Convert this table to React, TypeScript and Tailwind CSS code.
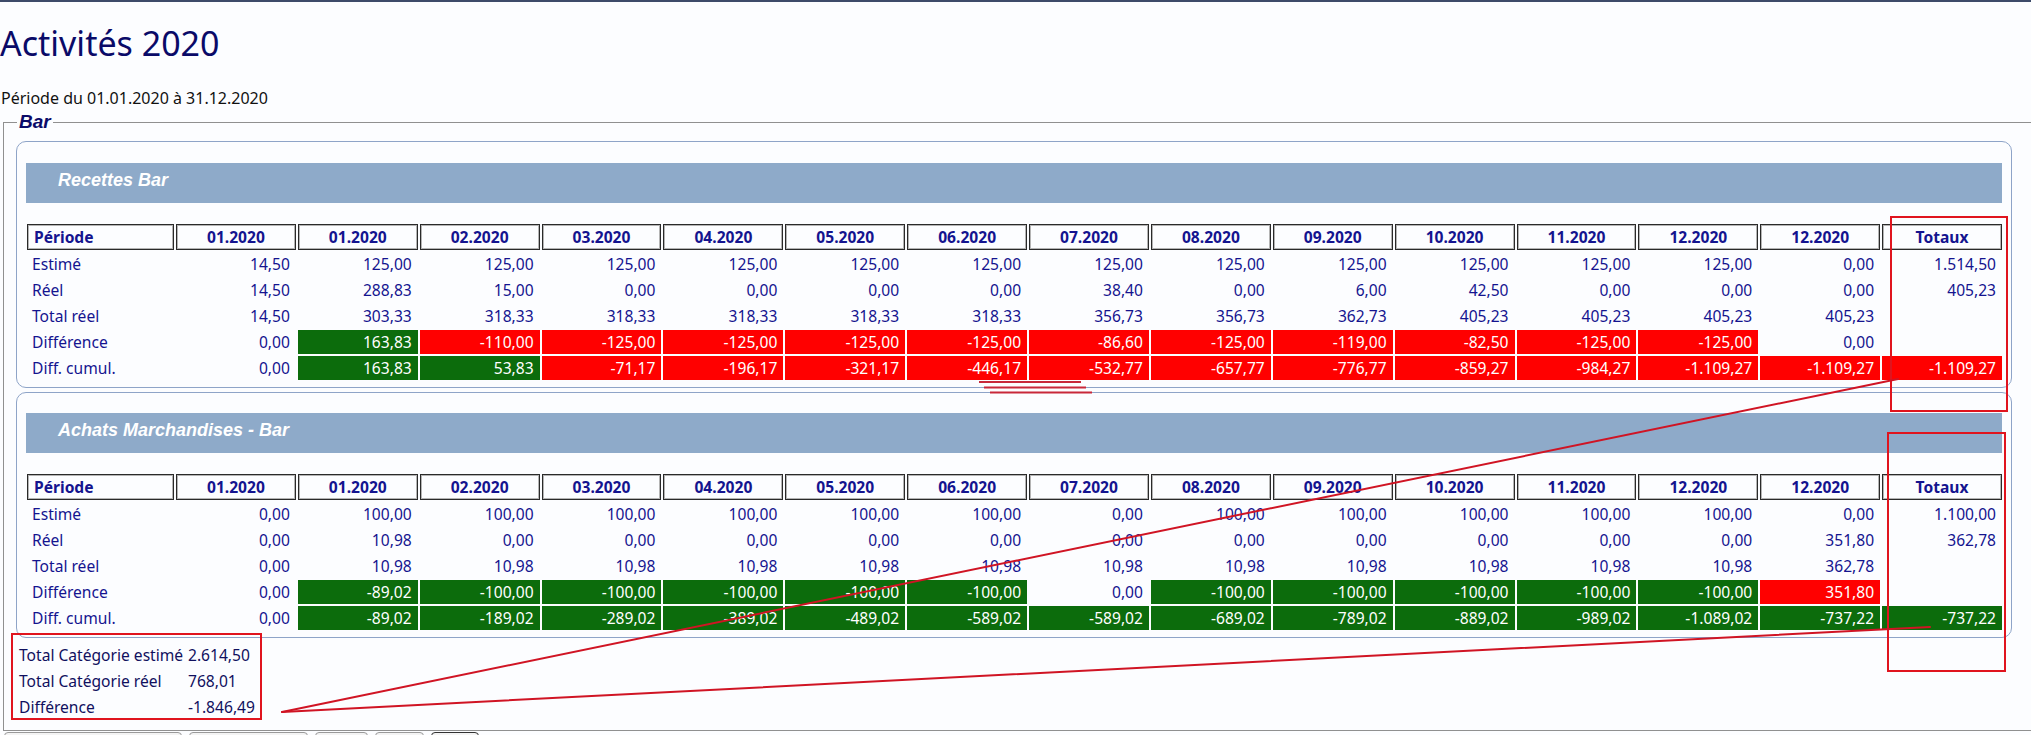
import React, { Fragment } from "react";

type Cell = [string, string?];
type Row = { label: string; cells: Cell[] };

const HEAD = [
  "01.2020",
  "01.2020",
  "02.2020",
  "03.2020",
  "04.2020",
  "05.2020",
  "06.2020",
  "07.2020",
  "08.2020",
  "09.2020",
  "10.2020",
  "11.2020",
  "12.2020",
  "12.2020",
  "Totaux",
];

const p = (v: string): Cell => [v];
const g = (v: string): Cell => [v, "g"];
const r = (v: string): Cell => [v, "r"];

const T1: Row[] = [
  {
    label: "Estimé",
    cells: [
      "14,50", "125,00", "125,00", "125,00", "125,00", "125,00", "125,00", "125,00",
      "125,00", "125,00", "125,00", "125,00", "125,00", "0,00", "1.514,50",
    ].map(p),
  },
  {
    label: "Réel",
    cells: [
      "14,50", "288,83", "15,00", "0,00", "0,00", "0,00", "0,00", "38,40", "0,00",
      "6,00", "42,50", "0,00", "0,00", "0,00", "405,23",
    ].map(p),
  },
  {
    label: "Total réel",
    cells: [
      "14,50", "303,33", "318,33", "318,33", "318,33", "318,33", "318,33", "356,73",
      "356,73", "362,73", "405,23", "405,23", "405,23", "405,23", "",
    ].map(p),
  },
  {
    label: "Différence",
    cells: [
      p("0,00"), g("163,83"), r("-110,00"), r("-125,00"), r("-125,00"), r("-125,00"),
      r("-125,00"), r("-86,60"), r("-125,00"), r("-119,00"), r("-82,50"), r("-125,00"),
      r("-125,00"), p("0,00"), p(""),
    ],
  },
  {
    label: "Diff. cumul.",
    cells: [
      p("0,00"), g("163,83"), g("53,83"), r("-71,17"), r("-196,17"), r("-321,17"),
      r("-446,17"), r("-532,77"), r("-657,77"), r("-776,77"), r("-859,27"), r("-984,27"),
      r("-1.109,27"), r("-1.109,27"), r("-1.109,27"),
    ],
  },
];

const T2: Row[] = [
  {
    label: "Estimé",
    cells: [
      "0,00", "100,00", "100,00", "100,00", "100,00", "100,00", "100,00", "0,00",
      "100,00", "100,00", "100,00", "100,00", "100,00", "0,00", "1.100,00",
    ].map(p),
  },
  {
    label: "Réel",
    cells: [
      "0,00", "10,98", "0,00", "0,00", "0,00", "0,00", "0,00", "0,00", "0,00", "0,00",
      "0,00", "0,00", "0,00", "351,80", "362,78",
    ].map(p),
  },
  {
    label: "Total réel",
    cells: [
      "0,00", "10,98", "10,98", "10,98", "10,98", "10,98", "10,98", "10,98", "10,98",
      "10,98", "10,98", "10,98", "10,98", "362,78", "",
    ].map(p),
  },
  {
    label: "Différence",
    cells: [
      p("0,00"), g("-89,02"), g("-100,00"), g("-100,00"), g("-100,00"), g("-100,00"),
      g("-100,00"), p("0,00"), g("-100,00"), g("-100,00"), g("-100,00"), g("-100,00"),
      g("-100,00"), r("351,80"), p(""),
    ],
  },
  {
    label: "Diff. cumul.",
    cells: [
      p("0,00"), g("-89,02"), g("-189,02"), g("-289,02"), g("-389,02"), g("-489,02"),
      g("-589,02"), g("-589,02"), g("-689,02"), g("-789,02"), g("-889,02"), g("-989,02"),
      g("-1.089,02"), g("-737,22"), g("-737,22"),
    ],
  },
];

function DataTable({ rows }: { rows: Row[] }) {
  return (
    <div className="ml-px mt-[21px] grid grid-cols-[147px_repeat(15,minmax(0,1fr))] gap-[2px] text-[15.6px] text-[#14148f]">
      <div className="h-[26px] border border-[#2a2a2a] pl-[6px] text-left font-bold leading-[24px] shadow-[inset_0_0_0_1px_#b4b4b4]">
        Période
      </div>
      {HEAD.map((h, i) => (
        <div
          key={i}
          className="h-[26px] border border-[#2a2a2a] text-center font-bold leading-[24px] shadow-[inset_0_0_0_1px_#b4b4b4]"
        >
          {h}
        </div>
      ))}
      {rows.map((row, ri) => (
        <Fragment key={ri}>
          <div className="h-[24px] pl-[5px] leading-[24px]">{row.label}</div>
          {row.cells.map((c, ci) => (
            <div
              key={ci}
              className={
                "h-[24px] pr-[6px] text-right leading-[24px] " +
                (c[1] === "g"
                  ? "bg-[#0c6c0c] text-white"
                  : c[1] === "r"
                  ? "bg-[#ff0000] text-white"
                  : "")
              }
            >
              {c[0]}
            </div>
          ))}
        </Fragment>
      ))}
    </div>
  );
}

function Panel({ title, rows, top }: { title: string; rows: Row[]; top: string }) {
  return (
    <div
      className={
        "ml-[12px] mr-[19px] rounded-[10px] border border-[#8ea4c8] px-[9px] pb-[7px] " + top
      }
    >
      <div className="h-[40px] bg-[#8eaac9] pl-[32px] pt-[6px] font-['Liberation_Sans',Arial,sans-serif] text-[18px] font-bold italic leading-[22px] text-white">
        {title}
      </div>
      <DataTable rows={rows} />
    </div>
  );
}

export default function App() {
  return (
    <div className="relative h-[735px] w-[2031px] overflow-hidden bg-[#fcfdff] font-['Noto_Sans',sans-serif]">
      <div className="h-[2px] bg-[#3d4b69]" />
      <h1 className="mt-[18px] text-[34px] leading-[46px] text-[#0a0a68]">Activités 2020</h1>
      <div className="mt-[21px] pl-px text-[16px] leading-[22px] text-[#111]">
        Période du 01.01.2020 à 31.12.2020
      </div>
      <fieldset className="ml-[3px] mt-[2px] border border-r-0 border-[#909090] pb-[10px]">
        <legend className="ml-[13px] px-[2px] font-['Liberation_Sans',Arial,sans-serif] text-[19px] font-bold italic leading-[22px] text-[#0a0a68]">
          Bar
        </legend>
        <Panel title="Recettes Bar" rows={T1} top="mt-[8px] pt-[21px]" />
        <Panel title="Achats Marchandises - Bar" rows={T2} top="mt-[4px] pt-[20px]" />
        <div className="ml-[15px] mt-[4px] grid w-fit grid-cols-[169px_auto] text-[15.6px] leading-[26px] text-[#10105e]">
          <div>Total Catégorie estimé</div>
          <div>2.614,50</div>
          <div>Total Catégorie réel</div>
          <div>768,01</div>
          <div>Différence</div>
          <div>-1.846,49</div>
        </div>
      </fieldset>
      <div className="ml-[4px] mt-[1px] flex gap-[7px]">
        <button className="h-[28px] w-[178px] rounded-[4px] border border-[#9a9a9a] bg-[#f4f4f4]" />
        <button className="h-[28px] w-[119px] rounded-[4px] border border-[#9a9a9a] bg-[#f4f4f4]" />
        <button className="h-[28px] w-[53px] rounded-[4px] border border-[#9a9a9a] bg-[#f4f4f4]" />
        <button className="h-[28px] w-[49px] rounded-[4px] border border-[#9a9a9a] bg-[#f4f4f4]" />
        <button className="h-[28px] w-[48px] rounded-[4px] border border-[#333] bg-[#f4f4f4]" />
      </div>

      <svg
        className="pointer-events-none absolute left-0 top-0"
        width="2031"
        height="735"
        viewBox="0 0 2031 735"
      >
        <g fill="none" stroke="#e0141e" strokeWidth="2">
          <rect x="1891" y="217" width="116" height="194" />
          <rect x="1888" y="433" width="117" height="238" />
          <rect x="12" y="634" width="249" height="85" />
        </g>
        <g stroke="#d01424" strokeWidth="2" strokeLinecap="round">
          <line x1="282" y1="712" x2="1898" y2="379" />
          <line x1="282" y1="712" x2="1930" y2="627" />
        </g>
        <g stroke="#c8283a" strokeWidth="2">
          <line x1="979" y1="382" x2="1081" y2="382" />
          <line x1="984" y1="387.5" x2="1086" y2="387.5" />
          <line x1="990" y1="392.5" x2="1092" y2="392.5" />
        </g>
      </svg>
    </div>
  );
}
